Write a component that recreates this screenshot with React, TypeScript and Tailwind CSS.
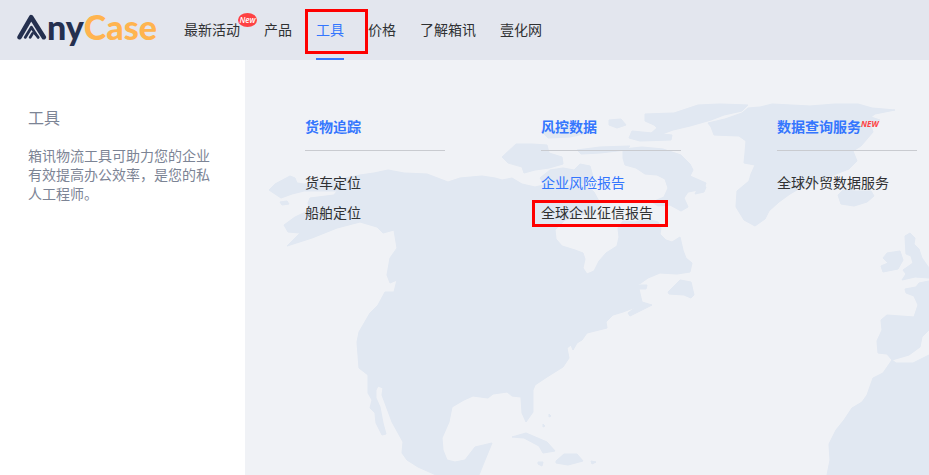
type NavItem = { label: string; isNew?: boolean; active?: boolean };

const NAV_ITEMS: NavItem[] = [
  { label: '最新活动', isNew: true },
  { label: '产品' },
  { label: '工具', active: true },
  { label: '价格' },
  { label: '了解箱讯' },
  { label: '壹化网' },
];

type ToolLink = { label: string; highlighted?: boolean; marked?: boolean };

const TOOL_GROUPS: Array<{ title: string; isNew?: boolean; links: ToolLink[] }> = [
  {
    title: '货物追踪',
    links: [{ label: '货车定位' }, { label: '船舶定位' }],
  },
  {
    title: '风控数据',
    links: [
      { label: '企业风险报告', highlighted: true },
      { label: '全球企业征信报告', marked: true },
    ],
  },
  {
    title: '数据查询服务',
    isNew: true,
    links: [{ label: '全球外贸数据服务' }],
  },
];

function Logo() {
  return (
    <a href="#" aria-label="AnyCase" className="flex items-start w-[166px] pl-[17px] shrink-0">
      <svg width="30" height="26" viewBox="0 0 30 26" fill="none" className="mt-[14px] shrink-0">
        <path d="M2.6 23.2 L14.2 3.2 L26.8 23.2" stroke="#25304f" strokeWidth="4.6" strokeLinecap="round" strokeLinejoin="round" />
        <path d="M8.2 23.4 L14.4 13.2 L18.8 20.2" stroke="#25304f" strokeWidth="2.8" strokeLinecap="round" strokeLinejoin="round" />
        <path d="M13.2 23.4 L15.6 19.4 M18.6 20 L21.2 23.4" stroke="#25304f" strokeWidth="2.8" strokeLinecap="round" />
      </svg>
      <span className="mt-[6px] font-['Lato',sans-serif] font-black text-[34px] leading-[42px] text-[#25304f]">
        ny<span className="text-[#ffb44f]">Case</span>
      </span>
    </a>
  );
}

function WorldMap() {
  return (
    <svg
      className="absolute inset-0 size-full"
      viewBox="245 60 684 415"
      preserveAspectRatio="xMinYMin slice"
      fill="#e1e8f2"
      stroke="#e1e8f2"
      strokeWidth="1"
      strokeLinejoin="round"
      aria-hidden="true"
    >
      {/* North America */}
      <path d="M269 190 L275 184 L290 176 L295 178 L297 183 L304 184 L318 181 L340 179 L360 175 L374 173 L388 170 L404 173 L427 174 L448 182 L460 178 L482 176 L495 178 L502 180 L512 178 L522 184 L535 187 L548 184 L562 187 L575 184 L588 187 L594 192 L600 203 L596 211 L582 215 L565 220 L555 230 L556 239 L562 246 L575 250 L583 253 L585 259 L583 268 L587 274 L594 271 L599 261 L606 253 L617 246 L619 237 L618 228 L623 221 L635 222 L646 219 L658 222 L661 228 L660 234 L666 240 L672 242 L680 237 L683 250 L686 258 L692 263 L690 272 L677 274 L660 273 L648 278 L641 283 L637 285 L647 285 L646 289 L639 289 L642 302 L652 305 L630 316 L628 313 L636 307 L623 312 L613 315 L606 322 L607 328 L587 333 L582 340 L577 343 L573 350 L571 345 L567 348 L569 358 L563 367 L547 377 L535 385 L533 390 L533 412 L526 422 L522 413 L521 397 L512 396 L507 392 L493 394 L488 398 L473 396 L464 400 L452 407 L449 422 L442 438 L443 450 L447 460 L455 462 L465 460 L475 447 L492 443 L485 460 L479 475 L436 475 L418 467 L407 460 L402 453 L403 442 L392 422 L382 395 L383 388 L378 386 L376 390 L376 398 L380 407 L383 423 L386 434 L382 435 L376 423 L375 413 L370 408 L372 400 L368 393 L368 375 L359 368 L357 342 L359 332 L370 313 L378 305 L385 292 L394 292 L397 280 L390 283 L387 275 L390 258 L397 248 L394 230 L383 233 L377 227 L360 222 L337 228 L312 238 L287 246 L300 233 L288 232 L284 225 L295 217 L310 210 L308 203 L310 198 L334 195 L337 191 L304 191 L292 194 L281 198Z" />
      <path d="M280 202 L287 201 L289 204 L282 205Z" />

      {/* Arctic islands */}
      <path d="M502 157 L516 144 L532 144 L547 145 L549 153 L562 157 L563 164 L549 168 L535 170 L524 173 L522 167 L508 163Z" />
      <path d="M540 178 L550 170 L563 168 L574 170 L580 164 L590 166 L593 177 L584 184 L570 180 L561 188 L546 186Z" />
      <path d="M577 150 L600 147 L630 146 L626 150 L600 153 L581 154Z M609 120 L621 119 L626 125 L617 128 L609 125Z M632 131 L652 133 L672 135 L671 140 L640 141 L629 138Z M541 131 L560 128 L580 127 L588 133 L570 137 L548 138Z" />
      <path d="M623 149 L642 147 L663 149 L681 155 L690 164 L693 170 L690 176 L706 183 L704 189 L688 192 L684 198 L688 207 L681 211 L670 205 L658 206 L652 202 L664 197 L668 188 L665 179 L657 175 L645 174 L636 168 L625 165 L623 158Z" />
      <path d="M645 114 L674 113 L698 105 L720 104 L748 105 L742 111 L724 115 L711 120 L690 126 L673 130 L662 134 L649 135 L657 128 L654 125 L645 121Z" />
      <path d="M700 184 L706 187 L704 192 L695 194Z" />

      {/* Greenland and Iceland */}
      <path d="M708 123 L725 119 L742 113 L748 108 L760 107 L772 104 L810 106 L835 104 L858 104 L872 108 L895 110 L875 114 L871 117 L880 120 L871 126 L873 132 L861 146 L853 151 L857 161 L849 169 L836 174 L822 181 L802 187 L790 194 L779 202 L769 211 L765 219 L755 226 L744 220 L736 207 L737 191 L749 181 L751 174 L755 165 L744 163 L745 153 L746 141 L739 136 L714 135 L711 127Z" />
      <path d="M838 195 L843 190 L856 191 L871 191 L874 196 L867 202 L854 206 L841 204Z" />

      {/* Newfoundland and the Caribbean */}
      <path d="M668 292 L680 280 L691 282 L694 295 L691 298 L684 295 L669 294Z" />
      <path d="M512 437 L526 433 L547 442 L555 451 L543 453 L539 446 L524 438Z M556 461 L564 454 L577 454 L583 461 L568 465 L556 463Z M538 462 L543 462 L542 466 L538 464Z M591 461 L596 462 L592 464Z M549 414 L551 416 L549 417Z M543 424 L545 426 L543 427Z" />

      {/* British Isles */}
      <path d="M905 236 L910 233 L915 238 L914 244 L919 249 L922 258 L929 268 L929 278 L915 277 L902 280 L906 274 L903 270 L913 263 L911 256 L906 254Z" />
      <path d="M887 253 L900 251 L903 260 L898 269 L883 272 L881 266 L888 263 L883 258Z" />

      {/* Europe and Africa */}
      <path d="M929 281 L919 283 L916 287 L905 289 L906 293 L914 296 L918 305 L914 317 L887 315 L881 320 L882 330 L877 341 L878 353 L887 354 L892 360 L909 355 L920 347 L922 337 L929 330Z" />
      <path d="M892 360 L896 363 L913 363 L929 355 L929 475 L827 475 L830 460 L829 444 L836 430 L844 420 L852 408 L862 402 L867 395 L873 378 L883 373Z" />
    </svg>
  );
}

function Nav() {
  return (
    <nav className="flex gap-6 ml-[18px] text-[14px] leading-[58px] text-[#303133] whitespace-nowrap">
      {NAV_ITEMS.map((item) => (
        <a key={item.label} href="#" className={`relative h-[60px] ${item.active ? 'text-[#3476fe]' : ''}`}>
          {item.label}
          {item.isNew && (
            <span className="absolute left-[54px] top-[13px] w-[19px] h-[14px] rounded-[50%] bg-[#fe4142] text-white text-[8px] leading-[14px] font-semibold italic text-center font-['Open_Sans',sans-serif]">
              New
            </span>
          )}
          {item.active && (
            <>
              <span className="absolute left-0 bottom-0 w-full h-[2px] bg-[#3476fe]" />
              <span className="absolute -left-[11px] top-[9px] w-[63px] h-[45px] border-[3px] border-[#fe0000]" />
            </>
          )}
        </a>
      ))}
    </nav>
  );
}

export default function App() {
  return (
    <div className="min-h-screen flex flex-col bg-[#f0f2f6] font-['Noto_Sans_CJK_SC',sans-serif] overflow-x-hidden">
      <header className="relative z-10 flex h-[60px] bg-[#e3e6ee]">
        <Logo />
        <Nav />
      </header>

      <div className="flex flex-1">
        <aside className="w-[245px] shrink-0 bg-white px-7 pt-[45px] text-[#7c8495]">
          <h1 className="text-[16px] leading-6">工具</h1>
          <p className="mt-[17px] text-[14px] leading-[19px]">
            箱讯物流工具可助力您的企业有效提高办公效率，是您的私人工程师。
          </p>
        </aside>

        <main className="relative flex-1 min-w-0">
          <WorldMap />
          <div className="relative flex gap-24 pl-[60px] pt-[55px]">
            {TOOL_GROUPS.map((group) => (
              <section key={group.title} className="w-[140px] shrink-0 whitespace-nowrap">
                <h2 className="flex h-9 border-b border-[#c9cbd0] text-[14px] leading-[22px] font-bold text-[#3476fe]">
                  {group.title}
                  {group.isNew && (
                    <span className="text-[8px] leading-[18px] italic text-[#fe4142] font-['Open_Sans',sans-serif]">
                      NEW
                    </span>
                  )}
                </h2>
                <ul className="mt-4 text-[14px] leading-[30px] text-[#303133]">
                  {group.links.map((link) => (
                    <li key={link.label}>
                      <a href="#" className={`relative inline-block align-top ${link.highlighted ? 'text-[#3476fe]' : ''}`}>
                        {link.label}
                        {link.marked && (
                          <span className="absolute -left-[9px] top-[3px] w-[136px] h-[27px] border-[3px] border-[#fe0000]" />
                        )}
                      </a>
                    </li>
                  ))}
                </ul>
              </section>
            ))}
          </div>
        </main>
      </div>
    </div>
  );
}
